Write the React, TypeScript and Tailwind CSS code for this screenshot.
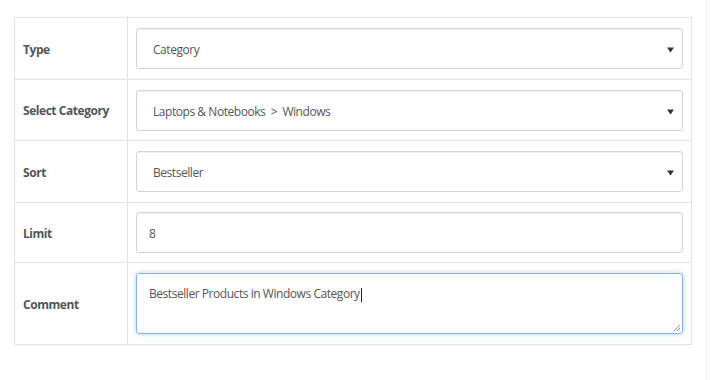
import React from 'react';

type Field = {
  label: string;
  kind: 'select' | 'input' | 'textarea';
  value: string;
  pad: string;
};

const fields: Field[] = [
  { label: 'Type', kind: 'select', value: 'Category', pad: 'pt-[10px] pb-[10px]' },
  { label: 'Select Category', kind: 'select', value: 'Laptops & Notebooks  >  Windows', pad: 'pt-[10px] pb-[9px]' },
  { label: 'Sort', kind: 'select', value: 'Bestseller', pad: 'pt-[10px] pb-[10px]' },
  { label: 'Limit', kind: 'input', value: '8', pad: 'pt-[9px] pb-[9px]' },
  { label: 'Comment', kind: 'textarea', value: 'Bestseller Products in Windows Category', pad: 'pt-[10px] pb-[10px]' },
];

function Caret() {
  return (
    <svg className="absolute right-[8px] top-[18px]" width="7" height="6" viewBox="0 0 7 6">
      <path d="M0 0.5 H7 L3.5 5.5 Z" fill="#333" />
    </svg>
  );
}

function Control({ field }: { field: Field }) {
  if (field.kind === 'select') {
    return (
      <div className="relative h-[41px] rounded-[3px] border border-[#d4d4d4] bg-white shadow-[inset_0_1px_1px_rgba(0,0,0,0.06)] pl-[16px] pt-[2px] flex items-center text-[12px] text-[#555] whitespace-pre">
        {field.value}
        <Caret />
      </div>
    );
  }
  if (field.kind === 'input') {
    return (
      <div className="h-[41px] rounded-[3px] border border-[#d4d4d4] bg-white shadow-[inset_0_1px_1px_rgba(0,0,0,0.06)] pl-[12px] pt-[2px] flex items-center text-[12px] text-[#555]">
        {field.value}
      </div>
    );
  }
  return (
    <div className="relative h-[61px] rounded-[3px] border border-[#7fb8e6] bg-white shadow-[0_0_5px_rgba(102,175,233,0.55)] pl-[12px] pt-[11px] text-[12px] text-[#555]">
      <span>{field.value}</span>
      <span className="inline-block w-px h-[14px] bg-[#222] align-middle ml-px" />
      <svg className="absolute right-[1px] bottom-[1px]" width="8" height="8" viewBox="0 0 8 8">
        <path d="M7 1 L1 7 M7 4 L4 7" stroke="#888" strokeWidth="0.9" />
      </svg>
    </div>
  );
}

export default function App() {
  return (
    <div
      className="w-[707px] h-[380px] bg-white border-r border-[#f0f0f0] pt-[17px] pl-[14px] tracking-[-0.45px]"
      style={{ fontFamily: '"Open Sans", "Liberation Sans", sans-serif' }}
    >
      <table className="w-[678px] border-collapse border border-[#e3e3e3]">
        <tbody>
          {fields.map((f) => (
            <tr key={f.label} className="border-t border-[#e3e3e3]">
              <td className="w-[113px] border-r border-[#e3e3e3] pl-[8px] pt-[2px] text-[12px] font-bold text-[#555] align-middle">
                {f.label}
              </td>
              <td className={`px-[8px] ${f.pad}`}>
                <Control field={f} />
              </td>
            </tr>
          ))}
        </tbody>
      </table>
    </div>
  );
}
